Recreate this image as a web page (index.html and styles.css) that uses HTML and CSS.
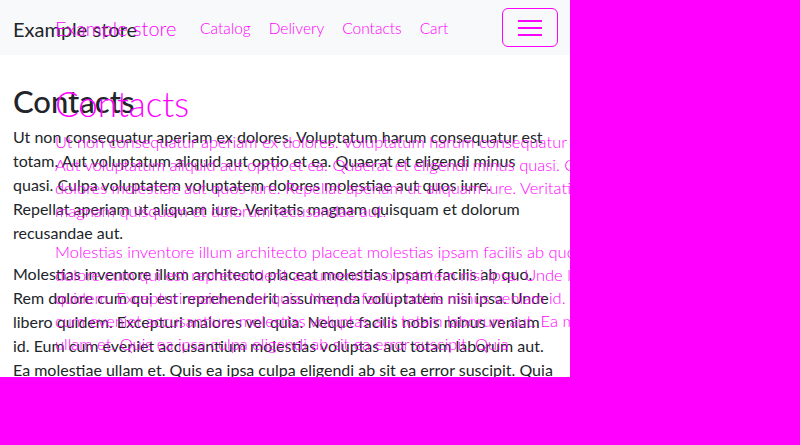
FILE: index.html
```html
<!DOCTYPE html>
<html lang="en">
<head>
<meta charset="utf-8">
<title>Contacts - Example store</title>
<link rel="stylesheet" href="styles.css">
</head>
<body>
<div class="frame">
  <nav class="navbar">
    <span class="brand">Example store</span>
  </nav>
  <main class="main">
    <h1 class="title">Contacts</h1>
    <p class="para">
      <span class="line">Ut non consequatur aperiam ex dolores. Voluptatum harum consequatur est</span>
      <span class="line">totam. Aut voluptatum aliquid aut optio et ea. Quaerat et eligendi minus</span>
      <span class="line">quasi. Culpa voluptatem voluptatem dolores molestiae aut quos iure.</span>
      <span class="line">Repellat aperiam ut aliquam iure. Veritatis magnam quisquam et dolorum</span>
      <span class="line">recusandae aut.</span>
    </p>
    <p class="para">
      <span class="line">Molestias inventore illum architecto placeat molestias ipsam facilis ab quo.</span>
      <span class="line">Rem dolore cum qui est reprehenderit assumenda voluptatem nisi ipsa. Unde</span>
      <span class="line">libero quidem. Excepturi maiores vel quia. Neque facilis nobis minus veniam</span>
      <span class="line">id. Eum cum eveniet accusantium molestias voluptas aut totam laborum aut.</span>
      <span class="line">Ea molestiae ullam et. Quis ea ipsa culpa eligendi ab sit ea error suscipit. Quia</span>
    </p>
  </main>

  <div class="ghost" aria-hidden="true">
    <div class="ghost-nav">
      <span class="ghost-brand">Example store</span>
      <ul class="ghost-links">
        <li>Catalog</li>
        <li>Delivery</li>
        <li>Contacts</li>
        <li>Cart</li>
      </ul>
      <span class="ghost-toggler">
        <span class="bar"></span>
        <span class="bar"></span>
        <span class="bar"></span>
      </span>
    </div>
    <div class="ghost-main">
      <div class="ghost-title">Contacts</div>
      <p class="ghost-para">
        <span class="line">Ut non consequatur aperiam ex dolores. Voluptatum harum consequatur est totam.</span>
        <span class="line">Aut voluptatum aliquid aut optio et ea. Quaerat et eligendi minus quasi. Culpa voluptatem voluptatem</span>
        <span class="line">dolores molestiae aut quos iure. Repellat aperiam ut aliquam iure. Veritatis</span>
        <span class="line">magnam quisquam et dolorum recusandae aut.</span>
      </p>
      <p class="ghost-para">
        <span class="line">Molestias inventore illum architecto placeat molestias ipsam facilis ab quo. Rem</span>
        <span class="line">dolore cum qui est reprehenderit assumenda voluptatem nisi ipsa. Unde libero</span>
        <span class="line">quidem. Excepturi maiores vel quia. Neque facilis nobis minus veniam id. Eum</span>
        <span class="line">cum eveniet accusantium molestias voluptas aut totam laborum aut. Ea molestiae</span>
        <span class="line">ullam et. Quis ea ipsa culpa eligendi ab sit ea error suscipit. Quia</span>
      </p>
    </div>
  </div>
</div>
</body>
</html>
```
FILE: styles.css
```css
html, body {
  margin: 0;
  padding: 0;
}
body {
  background: #ff00ff;
  font-family: Lato, "Open Sans", "Noto Sans", sans-serif;
  color: #212529;
}
.frame {
  position: relative;
  width: 570px;
  height: 377px;
  background: #ffffff;
  overflow: hidden;
}
.navbar {
  height: 55px;
  background: #f8f9fa;
  display: flex;
  align-items: center;
  padding: 0 13px;
}
.brand {
  font-size: 20px;
  color: #212529;
  line-height: 1;
  padding-top: 3px;
}
.main {
  padding: 0 13px;
}
.title {
  margin: 28px 0 6px;
  font-size: 31px;
  font-weight: 500;
  line-height: 36px;
  color: #212529;
}
.para {
  margin: 0 0 17px;
  font-size: 16px;
  line-height: 24px;
}
.line {
  display: block;
  white-space: nowrap;
}

/* magenta overlay layer */
.ghost {
  position: absolute;
  top: 0;
  left: 0;
  width: 700px;
  color: #ff00ff;
  font-weight: 300;
  pointer-events: none;
}
.ghost-nav {
  box-sizing: border-box;
  width: 558px;
  height: 55px;
  display: flex;
  align-items: center;
  padding-left: 55px;
}
.ghost-brand {
  font-size: 20px;
  width: 145px;
}
.ghost-links {
  list-style: none;
  margin: 0;
  padding: 0;
  display: flex;
  gap: 18px;
  font-size: 15.5px;
}
.ghost-toggler {
  margin-left: auto;
  box-sizing: border-box;
  width: 56px;
  height: 39px;
  border: 1px solid #ff00ff;
  border-radius: 6px;
  display: flex;
  flex-direction: column;
  justify-content: center;
  align-items: center;
  gap: 5px;
}
.bar {
  display: block;
  width: 24px;
  height: 2px;
  background: #ff00ff;
}
.ghost-main {
  padding-left: 55px;
}
.ghost-title {
  margin-top: 28px;
  font-size: 35px;
  line-height: 40px;
}
.ghost-para {
  margin: 8px 0 18px;
  font-size: 16.5px;
  line-height: 23px;
}
```
